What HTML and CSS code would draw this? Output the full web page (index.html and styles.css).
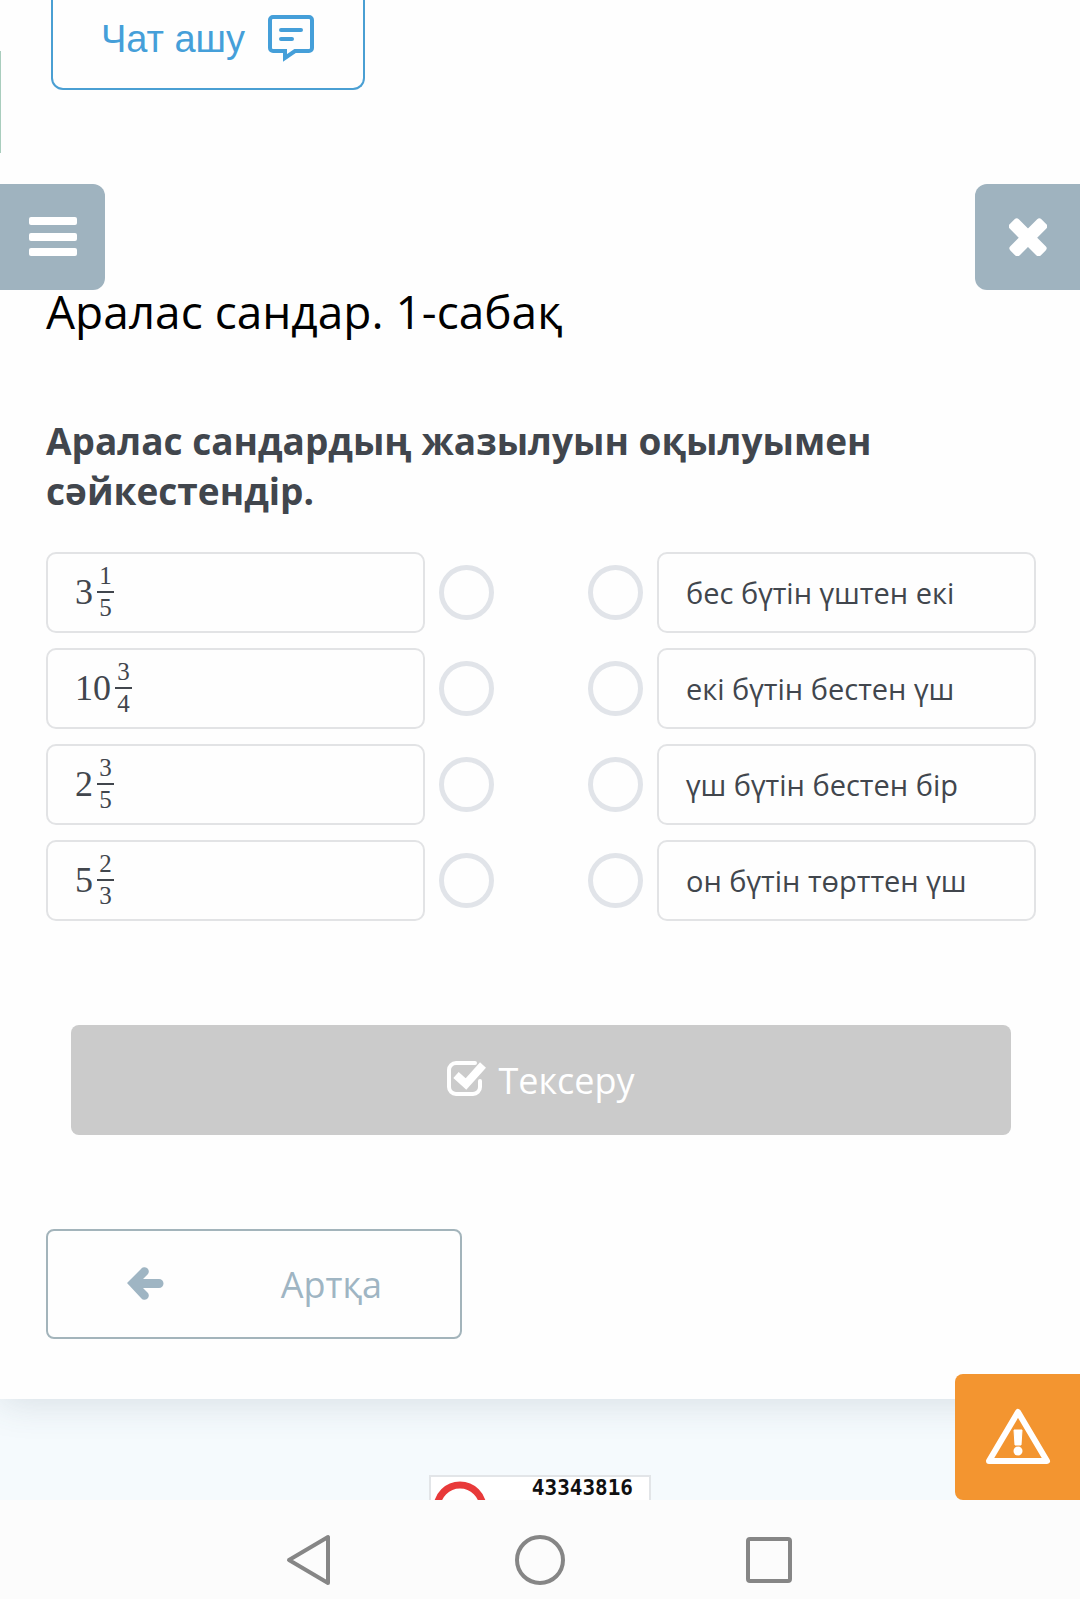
FILE: index.html
```
<!DOCTYPE html>
<html lang="kk">
<head>
    <meta charset="UTF-8">
    <meta name="viewport" content="width=device-width, initial-scale=1.0">
    <title>Аралас сандар. 1-сабақ</title>
    <link rel="stylesheet" href="styles.css">
</head>
<body>
    <main class="card">
        <div class="top-bar">
            <div class="side-line"></div>
            <button class="chat-button">
                Чат ашу
                <svg width="48" height="50" viewBox="0 0 48 50" fill="none" stroke="currentColor" stroke-width="4" stroke-linecap="round">
                    <path d="M6 3h36a3 3 0 0 1 3 3v28a3 3 0 0 1-3 3H28l-10 7v-7H6a3 3 0 0 1-3-3V6a3 3 0 0 1 3-3z"/>
                    <path d="M14 16h20M14 25h11"/>
                </svg>
            </button>
        </div>

        <div class="tabs">
            <button class="tab tab-left" aria-label="Мәзір">
                <svg width="48" height="40" viewBox="0 0 48 40" fill="#fff">
                    <rect width="48" height="8" rx="2"/>
                    <rect y="16" width="48" height="8" rx="2"/>
                    <rect y="31" width="48" height="8" rx="2"/>
                </svg>
            </button>
            <button class="tab tab-right" aria-label="Жабу">
                <svg width="38" height="38" viewBox="0 0 38 38" fill="#fff">
                    <rect x="-3" y="13" width="44" height="13" rx="3" transform="rotate(45 19 19)"/>
                    <rect x="-3" y="13" width="44" height="13" rx="3" transform="rotate(-45 19 19)"/>
                </svg>
            </button>
        </div>

        <div class="lesson">
            <h1>Аралас сандар. 1-сабақ</h1>
            <h2>Аралас сандардың жазылуын оқылуымен сәйкестендір.</h2>

            <div class="match">
                <div class="column">
                    <div class="item">
                        <label class="box number" for="n1">3<span class="fraction"><span>1</span><span>5</span></span></label>
                        <input type="radio" name="number" id="n1">
                    </div>
                    <div class="item">
                        <label class="box number" for="n2">10<span class="fraction"><span>3</span><span>4</span></span></label>
                        <input type="radio" name="number" id="n2">
                    </div>
                    <div class="item">
                        <label class="box number" for="n3">2<span class="fraction"><span>3</span><span>5</span></span></label>
                        <input type="radio" name="number" id="n3">
                    </div>
                    <div class="item">
                        <label class="box number" for="n4">5<span class="fraction"><span>2</span><span>3</span></span></label>
                        <input type="radio" name="number" id="n4">
                    </div>
                </div>
                <div class="column">
                    <div class="item">
                        <input type="radio" name="reading" id="r1">
                        <label class="box" for="r1">бес бүтін үштен екі</label>
                    </div>
                    <div class="item">
                        <input type="radio" name="reading" id="r2">
                        <label class="box" for="r2">екі бүтін бестен үш</label>
                    </div>
                    <div class="item">
                        <input type="radio" name="reading" id="r3">
                        <label class="box" for="r3">үш бүтін бестен бір</label>
                    </div>
                    <div class="item">
                        <input type="radio" name="reading" id="r4">
                        <label class="box" for="r4">он бүтін төрттен үш</label>
                    </div>
                </div>
            </div>

            <button class="check-button">
                <svg width="39" height="40" viewBox="0 0 39 40" fill="none" stroke="#fff">
                    <path d="M28 3H9a7 7 0 0 0-7 7v17a7 7 0 0 0 7 7h17a7 7 0 0 0 7-7v-6" stroke-width="4" stroke-linecap="round"/>
                    <path d="M9 15l10 9L36 5" stroke-width="8"/>
                </svg>
                Тексеру
            </button>

            <button class="back-button">
                <svg width="38" height="34" viewBox="0 0 38 34">
                    <path d="M1 16L15 2a4 4 0 0 1 7 5l-5 5h16a4 4 0 0 1 0 9H17l5 5a4 4 0 0 1-7 5z" fill="currentColor"/>
                </svg>
                <span>Артқа</span>
            </button>
        </div>
    </main>

    <footer class="footer">
        <div class="counter">
            <svg width="56" height="23" viewBox="0 0 56 23" fill="none" stroke="#e83a3a" stroke-width="7">
                <circle cx="29" cy="31" r="23"/>
            </svg>
            <span>43343816</span>
        </div>
        <button class="warning-button" aria-label="Қате туралы хабарлау">
            <svg width="66" height="60" viewBox="0 0 66 60">
                <path d="M33 5L62 54H4z" fill="none" stroke="#fff" stroke-width="6" stroke-linejoin="round"/>
                <path d="M29 23h8l-1 15h-6z" fill="#fff" stroke="#fff" stroke-linejoin="round"/>
                <circle cx="33" cy="44" r="4.5" fill="#fff"/>
            </svg>
        </button>
    </footer>

    <nav class="system-bar">
        <button aria-label="Артқа">
            <svg width="50" height="52" viewBox="0 0 50 52"><path d="M42 3v46L3 26z"/></svg>
        </button>
        <button aria-label="Басты бет">
            <svg width="50" height="52" viewBox="0 0 50 52"><circle cx="25" cy="26" r="23"/></svg>
        </button>
        <button aria-label="Қолданбалар">
            <svg width="50" height="52" viewBox="0 0 50 52"><rect x="4" y="5" width="42" height="42" rx="2"/></svg>
        </button>
    </nav>
</body>
</html>
```

FILE: styles.css
```
* {
    box-sizing: border-box;
}

body {
    margin: 0;
    min-height: 100vh;
    display: flex;
    flex-direction: column;
    background: #f5fafd;
    font-family: 'Open Sans', 'Noto Sans', sans-serif;
    color: #41464d;
}

button {
    display: flex;
    align-items: center;
    justify-content: center;
    padding: 0;
    border: none;
    background: none;
    font-family: inherit;
    cursor: pointer;
}

svg {
    flex: none;
}

.card {
    background: #fefefe;
    box-shadow: 0 4px 36px rgba(60, 80, 100, 0.16);
}

.top-bar {
    display: flex;
    align-items: flex-start;
    gap: 50px;
    height: 153px;
}

.side-line {
    align-self: flex-end;
    width: 1px;
    height: 102px;
    background: #a9cdbd;
}

.chat-button {
    gap: 22px;
    width: 314px;
    height: 90px;
    padding-bottom: 10px;
    border: 2px solid #4a9fd3;
    border-top: none;
    border-radius: 0 0 12px 12px;
    font-family: 'Liberation Sans', sans-serif;
    font-size: 38px;
    color: #459fd9;
}

.tabs {
    display: flex;
    justify-content: space-between;
    margin-top: 31px;
}

.tab {
    width: 105px;
    height: 106px;
    background: #9fb3bf;
}

.tab-left {
    border-radius: 0 12px 12px 0;
}

.tab-right {
    border-radius: 12px 0 0 12px;
}

.lesson {
    padding: 0 44px 60px 46px;
}

h1 {
    margin: 0;
    font-size: 46px;
    font-weight: normal;
    line-height: 42px;
    color: #000;
}

h2 {
    margin: 84px 0 36px;
    font-size: 37px;
    line-height: 50px;
}

.match {
    display: flex;
    justify-content: space-between;
    gap: 94px;
}

.column {
    flex: 1;
    display: flex;
    flex-direction: column;
    gap: 15px;
}

.item {
    display: flex;
    align-items: center;
    gap: 14px;
}

.item input {
    appearance: none;
    flex: none;
    width: 55px;
    height: 55px;
    margin: 0;
    border: 5px solid #e1e4e9;
    border-radius: 50%;
}

.item input:checked {
    border-color: #459fd9;
}

.box {
    flex: 1;
    display: flex;
    align-items: center;
    height: 81px;
    padding: 0 27px;
    border: 2px solid #e2e3e5;
    border-radius: 10px;
    font-size: 29px;
}

.number {
    gap: 4px;
    padding-bottom: 2px;
    font-family: 'Liberation Serif', serif;
    font-size: 36px;
}

.fraction {
    display: flex;
    flex-direction: column;
    width: 17px;
    font-size: 25px;
    line-height: 30px;
    text-align: center;
}

.fraction span:first-child {
    border-bottom: 2px solid #41464d;
}

.check-button {
    gap: 12px;
    width: calc(100% - 50px);
    height: 110px;
    margin: 104px 25px 94px;
    border-radius: 8px;
    background: #cbcbcb;
    font-size: 36px;
    color: #fff;
}

.back-button {
    justify-content: space-between;
    width: 416px;
    height: 110px;
    padding: 0 78px;
    border: 2px solid #a3b4bb;
    border-radius: 8px;
    font-size: 36px;
    color: #9fb5c3;
}

.footer {
    position: relative;
    flex: 1;
    display: flex;
    justify-content: center;
    align-items: flex-end;
    min-height: 101px;
}

.counter {
    display: flex;
    justify-content: space-between;
    width: 222px;
    height: 25px;
    padding-right: 16px;
    border: 2px solid #e2e5e8;
    border-bottom: none;
    background: #fff;
    font-family: 'DejaVu Sans Mono', monospace;
    font-size: 21px;
    font-weight: bold;
    line-height: 23px;
    color: #111;
}

.warning-button {
    position: absolute;
    right: 0;
    bottom: 0;
    width: 125px;
    height: 126px;
    border-radius: 8px 0 0 8px;
    background: #f39530;
}

.system-bar {
    display: flex;
    justify-content: center;
    align-items: center;
    gap: 179px;
    height: 99px;
    padding-top: 20px;
    background: #fcfcfc;
}

.system-bar svg {
    fill: none;
    stroke: #868686;
    stroke-width: 4;
    stroke-linejoin: round;
}
```
